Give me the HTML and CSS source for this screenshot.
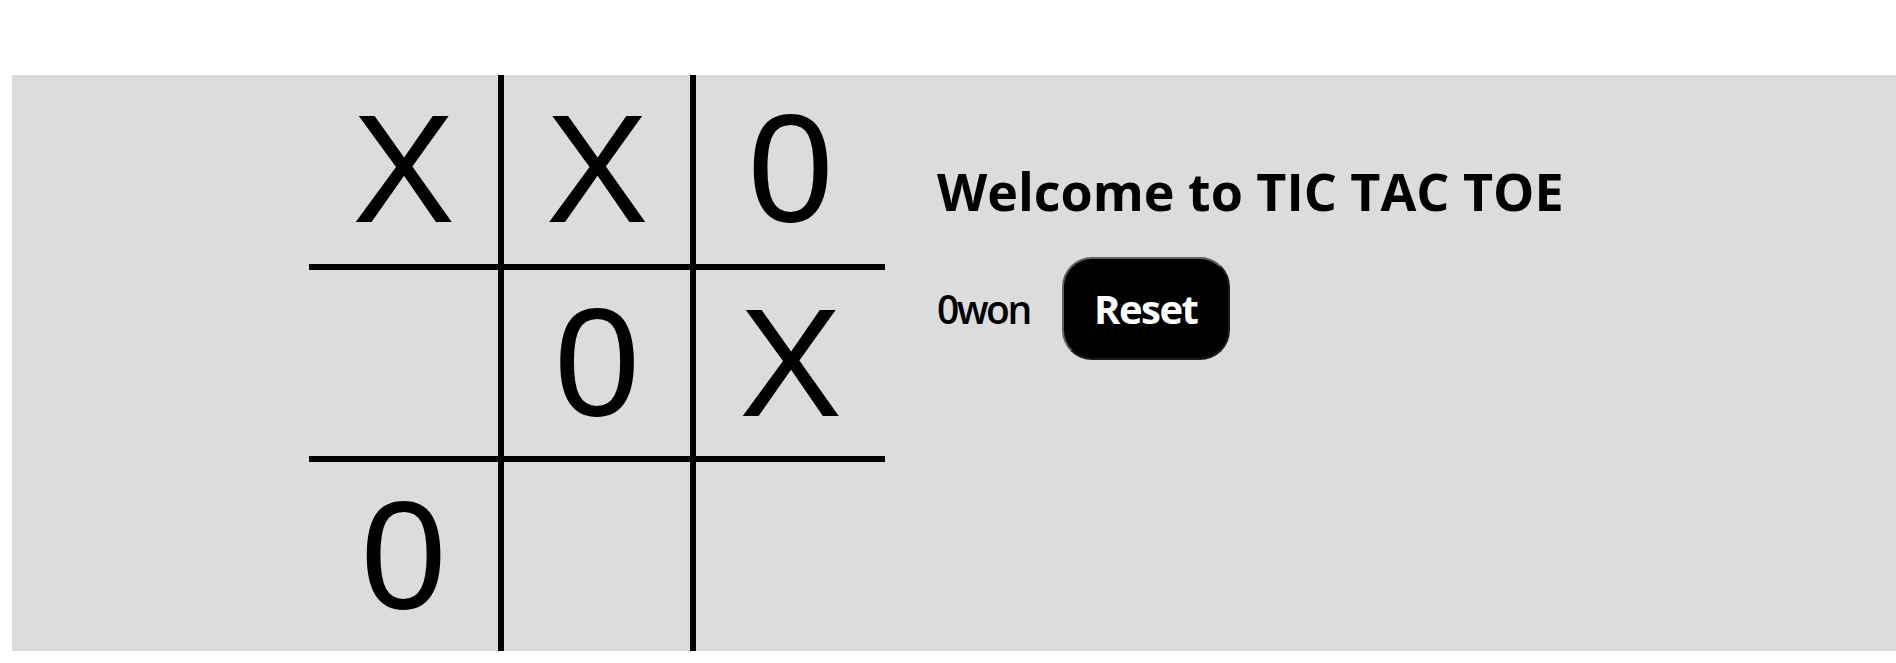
FILE: index.html
```html
<!DOCTYPE html>
<html lang="en">
<head>
<meta charset="utf-8">
<title>Tic Tac Toe</title>
<link rel="stylesheet" href="styles.css">
</head>
<body>
<main class="game">
  <div class="board">
    <div class="cell">X</div>
    <div class="cell">X</div>
    <div class="cell">0</div>
    <div class="cell"></div>
    <div class="cell">0</div>
    <div class="cell">X</div>
    <div class="cell">0</div>
    <div class="cell"></div>
    <div class="cell"></div>
  </div>
  <section class="panel">
    <h1 class="title">Welcome to TIC TAC TOE</h1>
    <div class="status-row">
      <span class="status">0won</span>
      <button class="reset" type="button">Reset</button>
    </div>
  </section>
</main>
</body>
</html>
```

FILE: styles.css
```css
html, body {
  margin: 0;
  padding: 0;
  background: #ffffff;
}

body {
  padding: 75px 0 0 12px;
  overflow: hidden;
}

.game {
  display: flex;
  align-items: flex-start;
  height: 576px;
  padding-left: 297px;
  background: #dcdcdc;
}

.board {
  display: grid;
  grid-template-columns: repeat(3, 192px);
  grid-template-rows: repeat(3, 192px);
  flex: none;
}

.cell {
  box-sizing: border-box;
  display: flex;
  align-items: center;
  justify-content: center;
  border: 3px solid #000;
  font-family: "Liberation Sans", Arial, sans-serif;
  font-size: 154px;
  color: #000;
}

.cell:nth-child(-n+3) { border-top: 0; }
.cell:nth-child(n+7) { border-bottom: 0; }
.cell:nth-child(3n+1) { border-left: 0; }
.cell:nth-child(3n) { border-right: 0; }

.panel {
  display: flex;
  flex-direction: column;
  margin-left: 52px;
  padding-top: 81px;
  font-family: "Comic Sans MS", "Open Sans", sans-serif;
  color: #000;
}

.title {
  margin: 0;
  font-family: "Open Sans", sans-serif;
  font-size: 52px;
  font-weight: 700;
  letter-spacing: 0;
  line-height: 70px;
}

.status-row {
  display: flex;
  align-items: center;
  gap: 32px;
  margin-top: 31px;
}

.status {
  font-family: "Open Sans", sans-serif;
  font-size: 39px;
  font-weight: 600;
  letter-spacing: -2.5px;
  line-height: normal;
}

.reset {
  box-sizing: border-box;
  display: flex;
  align-items: center;
  justify-content: center;
  width: 168px;
  height: 103px;
  padding: 0;
  border: 2px solid;
  border-color: #5e5e5e #1c1c1c #1c1c1c #5e5e5e;
  border-radius: 30px;
  background: #000;
  color: #fff;
  font-family: "Open Sans", sans-serif;
  font-size: 40px;
  font-weight: 700;
  letter-spacing: -1.5px;
  line-height: normal;
  cursor: pointer;
}
```
